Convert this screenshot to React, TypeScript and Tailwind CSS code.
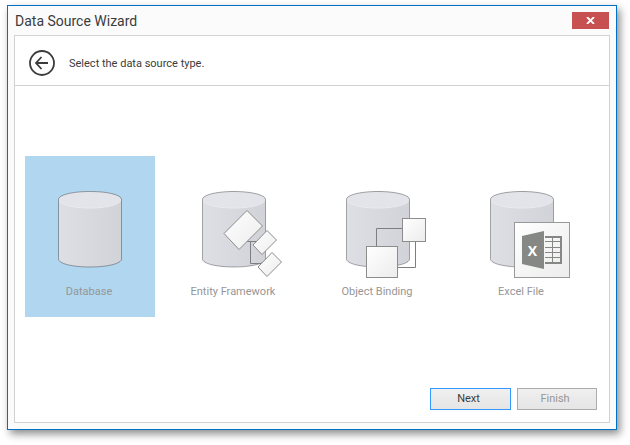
import { useState } from "react";

const Cylinder = () => (
  <>
    <path
      d="M16.5 13.5C16.5 9 30 5.5 48 5.5S79.5 9 79.5 13.5V73C79.5 77.5 66 81 48 81S16.5 77.5 16.5 73Z"
      fill="url(#cylinder)"
    />
    <ellipse cx="48" cy="13.5" rx="31" ry="8" fill="#e3e4e9" />
    <path d="M17 14C18 18.500 31 22 48 22S78 18.500 79 14" fill="none" stroke="#ececf0" />
    <path
      d="M16.5 13.5C16.5 9 30 5.5 48 5.5S79.5 9 79.5 13.5V73C79.5 77.5 66 81 48 81S16.5 77.5 16.5 73Z"
      fill="none"
      stroke="#000"
      strokeOpacity="0.32"
    />
  </>
);

const EntityShapes = () => (
  <g stroke="#8c8c8c" fill="url(#sheet)">
    <path d="M60 55.5H70M64.5 55.5V77.5H75" fill="none" stroke="#7d7d82" />
    <path d="M61 24.5L76.5 40L53 63.5L38 47.5Z" />
    <path d="M81 44.5L90.5 54L76 68.5L67 59Z" />
    <path d="M86 66.5L95.5 76L81 90.5L72 81Z" />
  </g>
);

const ObjectShapes = () => (
  <g stroke="#8c8c8c" fill="url(#sheet)">
    <path d="M46.5 60V42.5H73M68 81.5H85.5V56" fill="none" stroke="#7d7d82" />
    <rect x="72.5" y="32.5" width="23" height="23" />
    <rect x="36.5" y="60.5" width="31" height="31" />
  </g>
);

const ExcelShapes = () => (
  <g>
    <rect x="40.5" y="36.5" width="55" height="55" fill="url(#sheet)" stroke="#999999" />
    <path d="M48 50L70 45V83L48 78Z" fill="#868886" />
    <path
      d="M71 55.5H87M71 61.5H87M71 66.5H87M71 71.5H87M78.5 50V78"
      fill="none"
      stroke="#868886"
    />
    <path d="M71 51H87V77H71" fill="none" stroke="#868886" strokeWidth="2" />
    <text
      x="58.5"
      y="70"
      textAnchor="middle"
      fill="#ffffff"
      className="font-['Open_Sans',sans-serif] text-sm font-bold"
    >
      X
    </text>
  </g>
);

const sources = [
  { id: "database", label: "Database", Shapes: null },
  { id: "entity", label: "Entity Framework", Shapes: EntityShapes },
  { id: "object", label: "Object Binding", Shapes: ObjectShapes },
  { id: "excel", label: "Excel File", Shapes: ExcelShapes },
];

const App = () => {
  const [selected, setSelected] = useState("database");

  return (
    <div className="bg-white pt-[5px] pr-[13px] pb-[15px] pl-[7px] font-[Roboto,sans-serif] text-[11px] text-[#3c3c3c]">
      {/* shared gradients */}
      <svg className="absolute h-0 w-0" aria-hidden="true">
        <defs>
          <linearGradient id="cylinder">
            <stop offset="0" stopColor="#dedfe4" />
            <stop offset="1" stopColor="#d2d3d9" />
          </linearGradient>
          <linearGradient id="sheet" x1="0" y1="0" x2="1" y2="1">
            <stop offset="0" stopColor="#ffffff" />
            <stop offset="1" stopColor="#ececec" />
          </linearGradient>
        </defs>
      </svg>

      <div className="border border-[#0072c6] bg-[#fbfbfc] px-1.5 pb-1.5 shadow-[3px_4px_8px_rgba(0,0,0,0.45)]">
        <div className="flex h-[29px] items-center justify-between">
          <h1 className="pl-px text-sm">Data Source Wizard</h1>
          <button
            type="button"
            aria-label="Close"
            className="mr-px flex h-[17px] w-[37px] items-center justify-center bg-[#c75050] text-white"
          >
            <svg width="9" height="7" viewBox="0 0 9 7" fill="none" stroke="currentColor" strokeWidth="1.8">
              <path d="M1 0L8 7M8 0L1 7" />
            </svg>
          </button>
        </div>

        <div className="border border-[#d2d2d2] bg-white">
          <div className="flex h-[50px] items-center border-b border-[#d2d2d2] pt-1 pl-[13px]">
            <button type="button" aria-label="Back" className="mr-[13px]">
              <svg width="28" height="28" viewBox="0 0 28 28" fill="none" stroke="#3c3c3c" strokeWidth="1.8">
                <circle cx="14" cy="14" r="12" />
                <path d="M20 14H8M13.5 8L8 14L13.5 20" />
              </svg>
            </button>
            <p className="pt-1">Select the data source type.</p>
          </div>

          <div className="grid grid-cols-4 gap-3.5 pt-[70px] pr-[22px] pl-2.5">
            {sources.map(({ id, label, Shapes }) => (
              <button
                key={id}
                type="button"
                aria-pressed={selected === id}
                onClick={() => setSelected(id)}
                className={`flex flex-col items-center pt-[30px] pb-4 text-[#969696] ${
                  selected === id ? "bg-[#b1d6f0]" : ""
                }`}
              >
                <svg width="96" height="96" viewBox="0 0 96 96" aria-hidden="true">
                  <Cylinder />
                  {Shapes && <Shapes />}
                </svg>
                <span className="pr-0.5 leading-[19px]">{label}</span>
              </button>
            ))}
          </div>

          <div className="flex justify-end gap-1.5 pt-[71px] pr-3 pb-3">
            <button
              type="button"
              className="h-[22px] w-[81px] border border-[#3399ff] bg-linear-to-b from-[#f0f0f0] to-[#e5e5e5] pt-px pr-1"
            >
              Next
            </button>
            <button
              type="button"
              disabled
              className="h-[22px] w-20 border border-[#acacac] bg-linear-to-b from-[#f0f0f0] to-[#e5e5e5] pt-px pr-1 text-[#969696]"
            >
              Finish
            </button>
          </div>
        </div>
      </div>
    </div>
  );
};

export default App;
